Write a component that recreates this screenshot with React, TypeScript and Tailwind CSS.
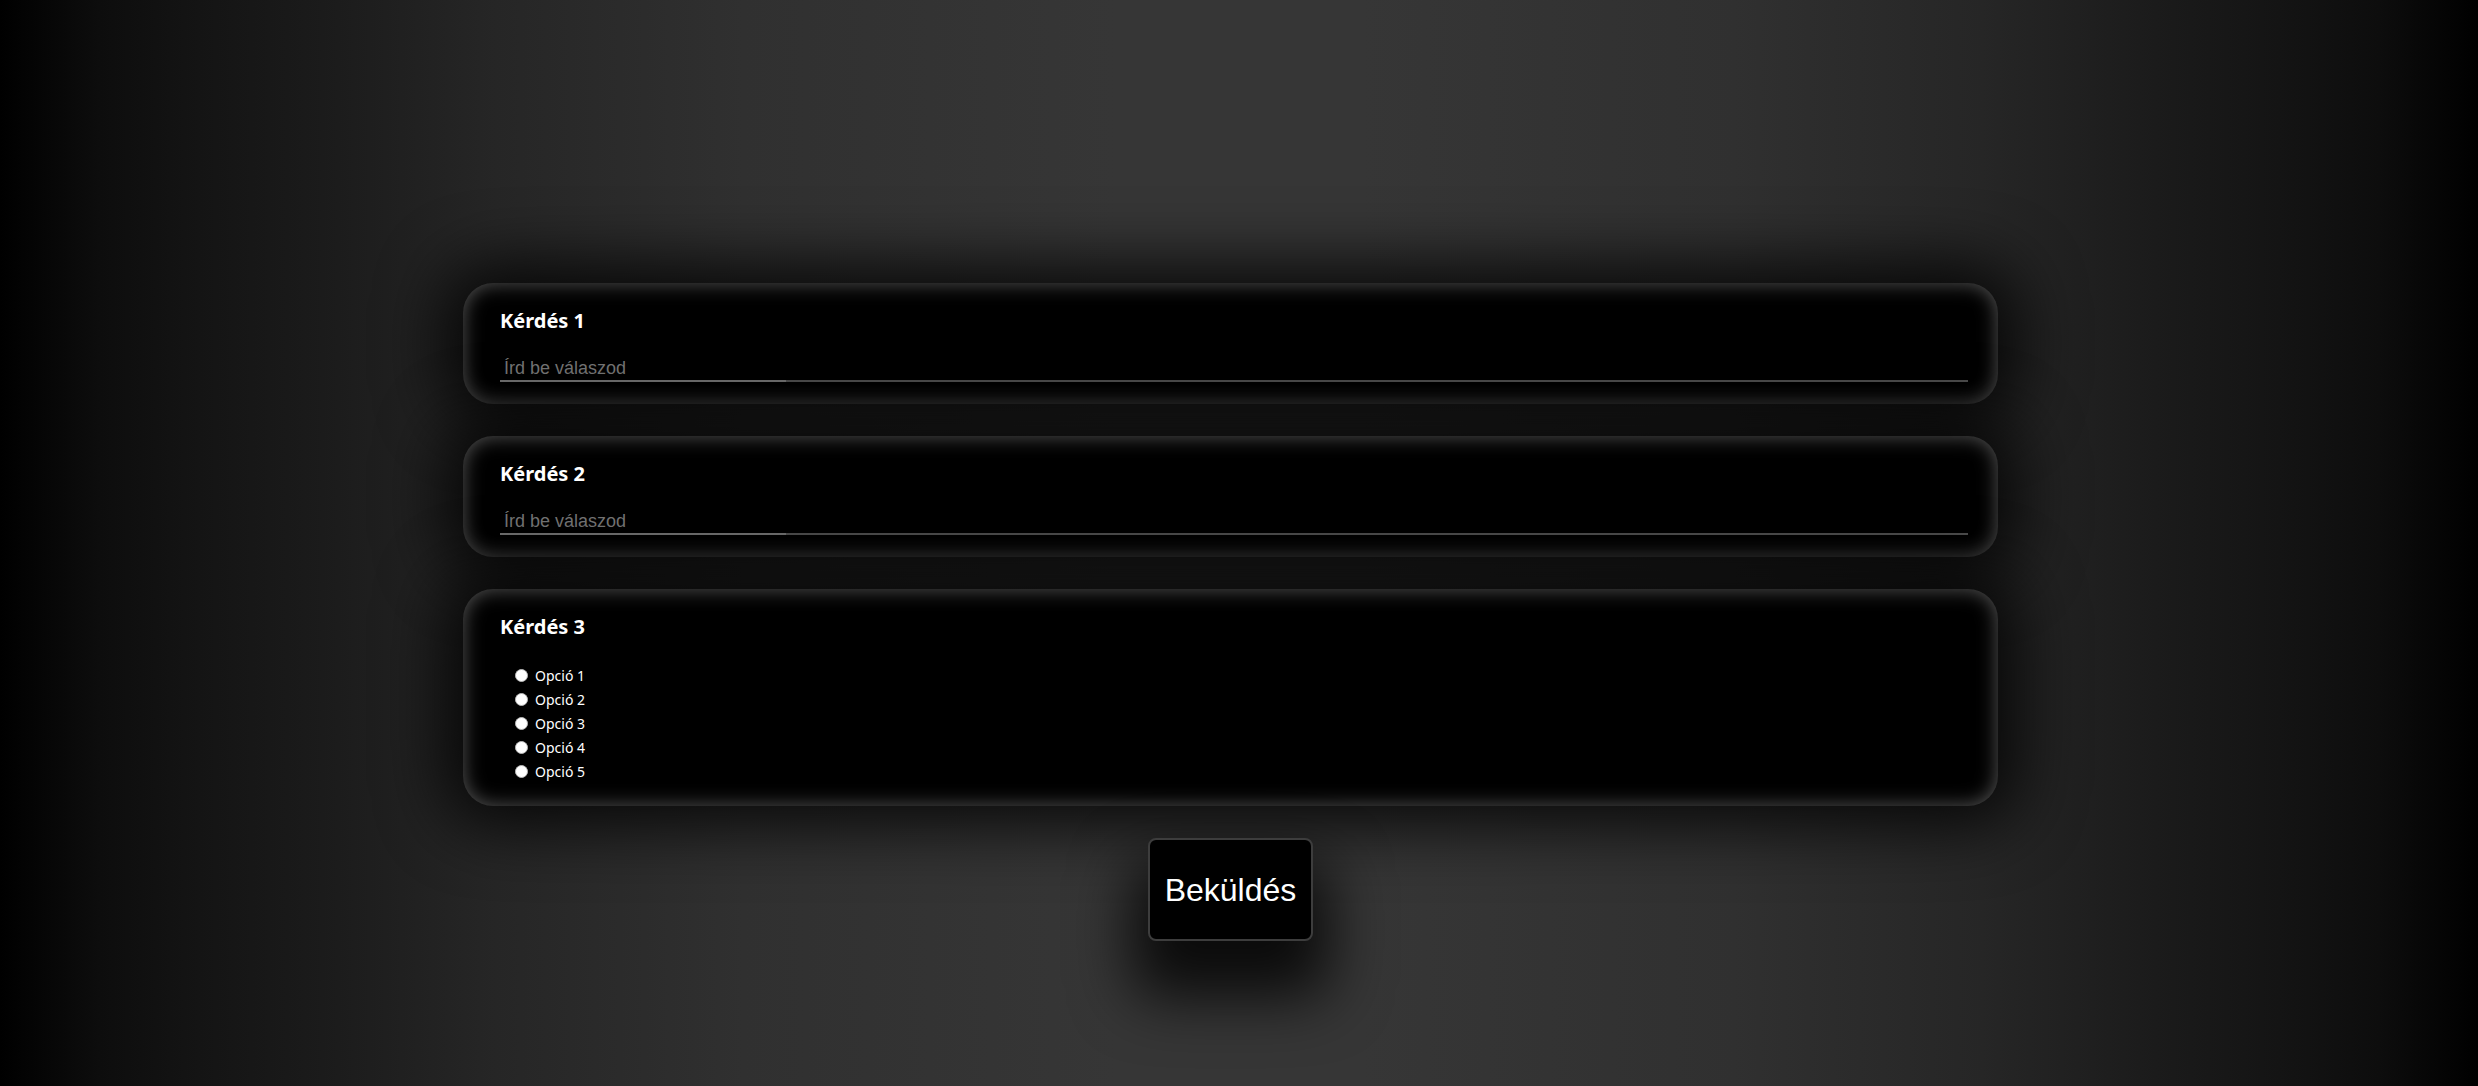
import { useState } from 'react';

interface Question {
  id: number;
  title: string;
  type: 'text' | 'radio';
  options?: string[];
}

const questions: Question[] = [
  { id: 1, title: 'Kérdés 1', type: 'text' },
  { id: 2, title: 'Kérdés 2', type: 'text' },
  { id: 3, title: 'Kérdés 3', type: 'radio', options: ['Opció 1', 'Opció 2', 'Opció 3', 'Opció 4', 'Opció 5'] },
];

function QuestionCard({ q }: { q: Question }) {
  const [picked, setPicked] = useState<string | null>(null);

  return (
    <div className="w-[1535px] rounded-[30px] bg-black pt-[24px] pb-[22px] pl-[37px] pr-[30px] shadow-[inset_0_0_20px_rgba(255,255,255,0.34),0_0_64px_20px_rgba(0,0,0,0.82)]">
      <h3 className="text-[20px] leading-[28px] font-bold text-white font-['Noto_Sans',sans-serif]">{q.title}</h3>

      {q.type === 'text' ? (
        <input
          type="text"
          placeholder="Írd be válaszod"
          className="mt-[21px] block w-full pt-[2px] pb-[3px] px-[4px] text-[18px] leading-[21px] text-white font-['Liberation_Sans',Arial,sans-serif] placeholder:text-[#777] outline-none bg-no-repeat bg-bottom bg-[length:100%_2px] bg-[linear-gradient(to_right,#747474_0%,#747474_19.5%,#505050_19.5%,#505050_100%)]"
        />
      ) : (
        <div className="mt-[22px] pl-[15px] pb-[1px]">
          {q.options?.map((o) => (
            <label key={o} className="flex h-[24px] items-center gap-[7px] cursor-pointer">
              <input
                type="radio"
                name={`q-${q.id}`}
                checked={picked === o}
                onChange={() => setPicked(o)}
                className="appearance-none w-[13px] h-[13px] rounded-full bg-white border border-[#bbb] checked:border-[4px] checked:border-[#3b82f6]"
              />
              <span className="text-[14px] text-white font-['Noto_Sans',sans-serif]">{o}</span>
            </label>
          ))}
        </div>
      )}
    </div>
  );
}

export default function App() {
  return (
    <div className="min-h-screen w-full bg-[linear-gradient(to_right,#000_0%,#0d0d0d_4%,#141414_8%,#1b1b1b_13%,#262626_20%,#303030_30%,#363636_45%,#363636_55%,#303030_70%,#262626_80%,#1b1b1b_87%,#141414_92%,#0d0d0d_96%,#000_100%)]">
      <div className="flex flex-col items-center gap-[32px] pt-[283px] pb-[40px] pr-[17px]">
        {questions.map((q) => (
          <QuestionCard key={q.id} q={q} />
        ))}

        <button className="w-[165px] h-[103px] rounded-[8px] border-2 border-[#3d3d3d] bg-black text-[32px] text-white font-['Liberation_Sans',Arial,sans-serif] shadow-[0_40px_60px_16px_rgba(0,0,0,0.8)]">
          Beküldés
        </button>
      </div>
    </div>
  );
}
